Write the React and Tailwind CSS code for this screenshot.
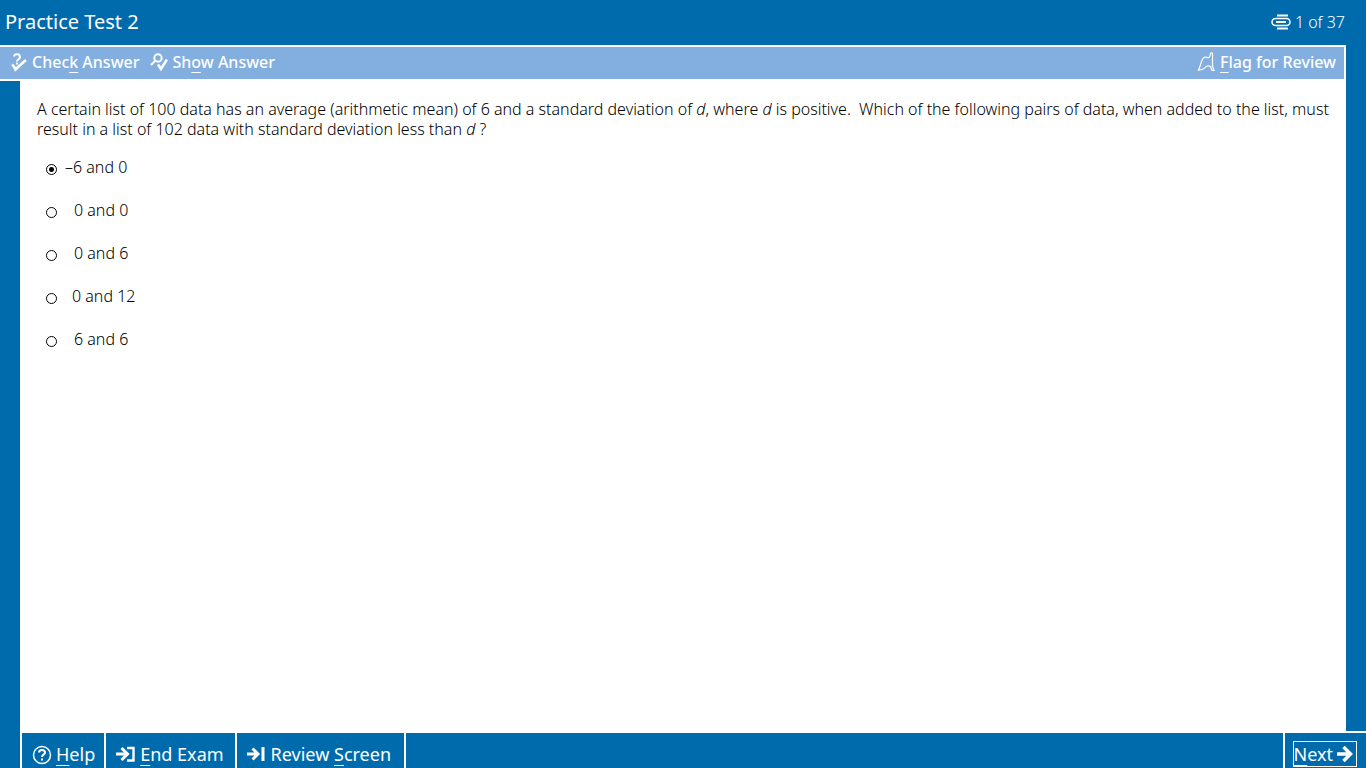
import { useState } from "react";

const options = [
  { id: "a", text: "–6 and 0", pad: "pl-2" },
  { id: "b", text: "0 and 0", pad: "pl-[17px]" },
  { id: "c", text: "0 and 6", pad: "pl-[17px]" },
  { id: "d", text: "0 and 12", pad: "pl-[15px]" },
  { id: "e", text: "6 and 6", pad: "pl-[17px]" },
];

const Key = ({ children }) => (
  <span className="underline decoration-1 underline-offset-4 [text-decoration-skip-ink:none]">
    {children}
  </span>
);

const CheckIcon = () => (
  <svg width="16" height="19" viewBox="0 0 16 19" fill="none" stroke="currentColor">
    <path d="M3 3.500C3.500 0.500 9 0.500 9 4C9 6.500 6 6 6 8.500" strokeWidth="2" />
    <path d="M5 10.500H7" strokeWidth="2" />
    <path d="M1 11.500C2.500 12.500 3.500 14 4.500 16.500C7.500 14 10.500 10.500 15 7" strokeWidth="2.600" />
  </svg>
);

const ShowIcon = () => (
  <svg width="18" height="18" viewBox="0 0 18 18" fill="none" stroke="currentColor">
    <circle cx="8" cy="5" r="3.700" strokeWidth="2" />
    <path d="M5.500 7.500L1 12" strokeWidth="2.200" />
    <path d="M8 11.500L11 16L17 6.500" strokeWidth="2.600" />
  </svg>
);

const FlagIcon = () => (
  <svg width="18" height="20" viewBox="0 0 18 20" fill="none" stroke="currentColor" strokeWidth="1.200">
    <path d="M13.500 1H15.500V14L17 18.500H15L13.500 14.500C11 13 9 14 7 16.500C5 18 3 17.500 1 18.500C4 15 3.500 8 7 5.500C9 4 10.500 6.500 12 5.500C13.500 4.500 13.500 3 13.500 1Z" />
  </svg>
);

const PagesIcon = () => (
  <svg width="20" height="16" viewBox="0 0 20 16" fill="none" stroke="currentColor">
    <path d="M6 1.500H17M6 14.500H17" strokeWidth="2" />
    <rect x="1" y="4.500" width="18" height="7" rx="3.500" strokeWidth="1.500" />
    <path d="M5 8H15" strokeWidth="2" />
  </svg>
);

const HelpIcon = () => (
  <svg width="20" height="20" viewBox="0 0 20 20" fill="none" stroke="currentColor">
    <circle cx="10" cy="10" r="8.500" strokeWidth="1.500" />
    <path d="M7 7.500C7 4 13 4 13 7.500C13 9.500 10 9.500 10 12M10 13.500V15.500" strokeWidth="2" />
  </svg>
);

const EndIcon = () => (
  <svg width="19" height="17" viewBox="0 0 19 17" fill="none" stroke="currentColor">
    <path d="M0 8H11M5.500 2L11.500 8L5.500 14" strokeWidth="3" />
    <path d="M11 2H17.500V14.500H11" strokeWidth="2.400" />
  </svg>
);

const ReviewIcon = () => (
  <svg width="19" height="17" viewBox="0 0 19 17" fill="none" stroke="currentColor">
    <path d="M0 8H10M5.500 2.500L11 8L5.500 13.500" strokeWidth="3" />
    <path d="M16 1V15" strokeWidth="3" />
  </svg>
);

const NextIcon = () => (
  <svg width="16" height="18" viewBox="0 0 16 18" fill="none" stroke="currentColor">
    <path d="M0 9H13M6.500 2L13.500 9L6.500 16" strokeWidth="3.500" />
  </svg>
);

const App = () => {
  const [answer, setAnswer] = useState("a");

  return (
    <div className="flex min-h-screen flex-col bg-[#006bac] font-['Noto_Sans',sans-serif] text-white">
      {/* Title bar */}
      <header className="flex h-[45px] items-center justify-between pb-px pl-[5px] pr-[21px]">
        <h1 className="text-[20px]">Practice Test 2</h1>
        <div className="flex items-center gap-1 text-[16px] font-light">
          <PagesIcon />
          <span>1 of 37</span>
        </div>
      </header>

      {/* Answer tools */}
      <div className="mr-5 flex h-9 items-center justify-between border-y-2 border-r-2 border-white bg-[#82aee0] pb-[2px] pl-[11px] pr-2 text-[16px] font-medium">
        <div className="flex items-center gap-[10px]">
          <button type="button" className="flex items-center gap-[5px]">
            <CheckIcon />
            <span>Chec<Key>k</Key> Answer</span>
          </button>
          <button type="button" className="flex items-center gap-[5px]">
            <ShowIcon />
            <span>Sh<Key>o</Key>w Answer</span>
          </button>
        </div>
        <button type="button" className="flex items-center gap-[5px]">
          <FlagIcon />
          <span><Key>F</Key>lag for Review</span>
        </button>
      </div>

      {/* Question */}
      <main className="mx-5 flex-1 bg-white pl-[17px] pr-2 pt-[18px] text-[16px] font-light leading-5 text-black">
        <p id="question">
          A certain list of 100 data has an average (arithmetic mean) of 6 and a
          standard deviation of <i>d</i>, where <i>d</i> is positive.&nbsp; Which
          of the following pairs of data, when added to the list, must result in
          a list of 102 data with standard deviation less than <i>d</i> ?
        </p>
        <div role="radiogroup" aria-labelledby="question" className="mt-[18px] flex flex-col gap-[23px] pl-[9px]">
          {options.map((option) => (
            <label key={option.id} className="flex items-center">
              <input
                type="radio"
                name="answer"
                checked={answer === option.id}
                onChange={() => setAnswer(option.id)}
                className="mt-1 size-[11px] appearance-none rounded-full border border-black bg-white checked:bg-[radial-gradient(circle,black_0_2px,white_3px)]"
              />
              <span className={option.pad}>{option.text}</span>
            </label>
          ))}
        </div>
      </main>

      {/* Navigation */}
      <footer className="ml-5 flex h-[37px] items-stretch justify-between border-l-2 border-t-2 border-white text-[18px]">
        <nav className="flex">
          <button type="button" className="flex items-center gap-1 border-r-2 border-white pl-[10px] pr-[9px] pt-2">
            <HelpIcon />
            <span><Key>H</Key>elp</span>
          </button>
          <button type="button" className="flex items-center gap-[5px] border-r-2 border-white pl-[10px] pr-[11px] pt-2">
            <EndIcon />
            <span><Key>E</Key>nd Exam</span>
          </button>
          <button type="button" className="flex items-center gap-[5px] border-r-2 border-white pl-[10px] pr-[13px] pt-2">
            <ReviewIcon />
            <span>Review <Key>S</Key>creen</span>
          </button>
        </nav>
        <div className="flex items-end border-l-2 border-white pb-px pl-2 pr-[9px]">
          <button type="button" className="flex h-[26px] items-center gap-1 border border-white pr-[3px]">
            <span><Key>N</Key>ext</span>
            <NextIcon />
          </button>
        </div>
      </footer>
    </div>
  );
};

export default App;
